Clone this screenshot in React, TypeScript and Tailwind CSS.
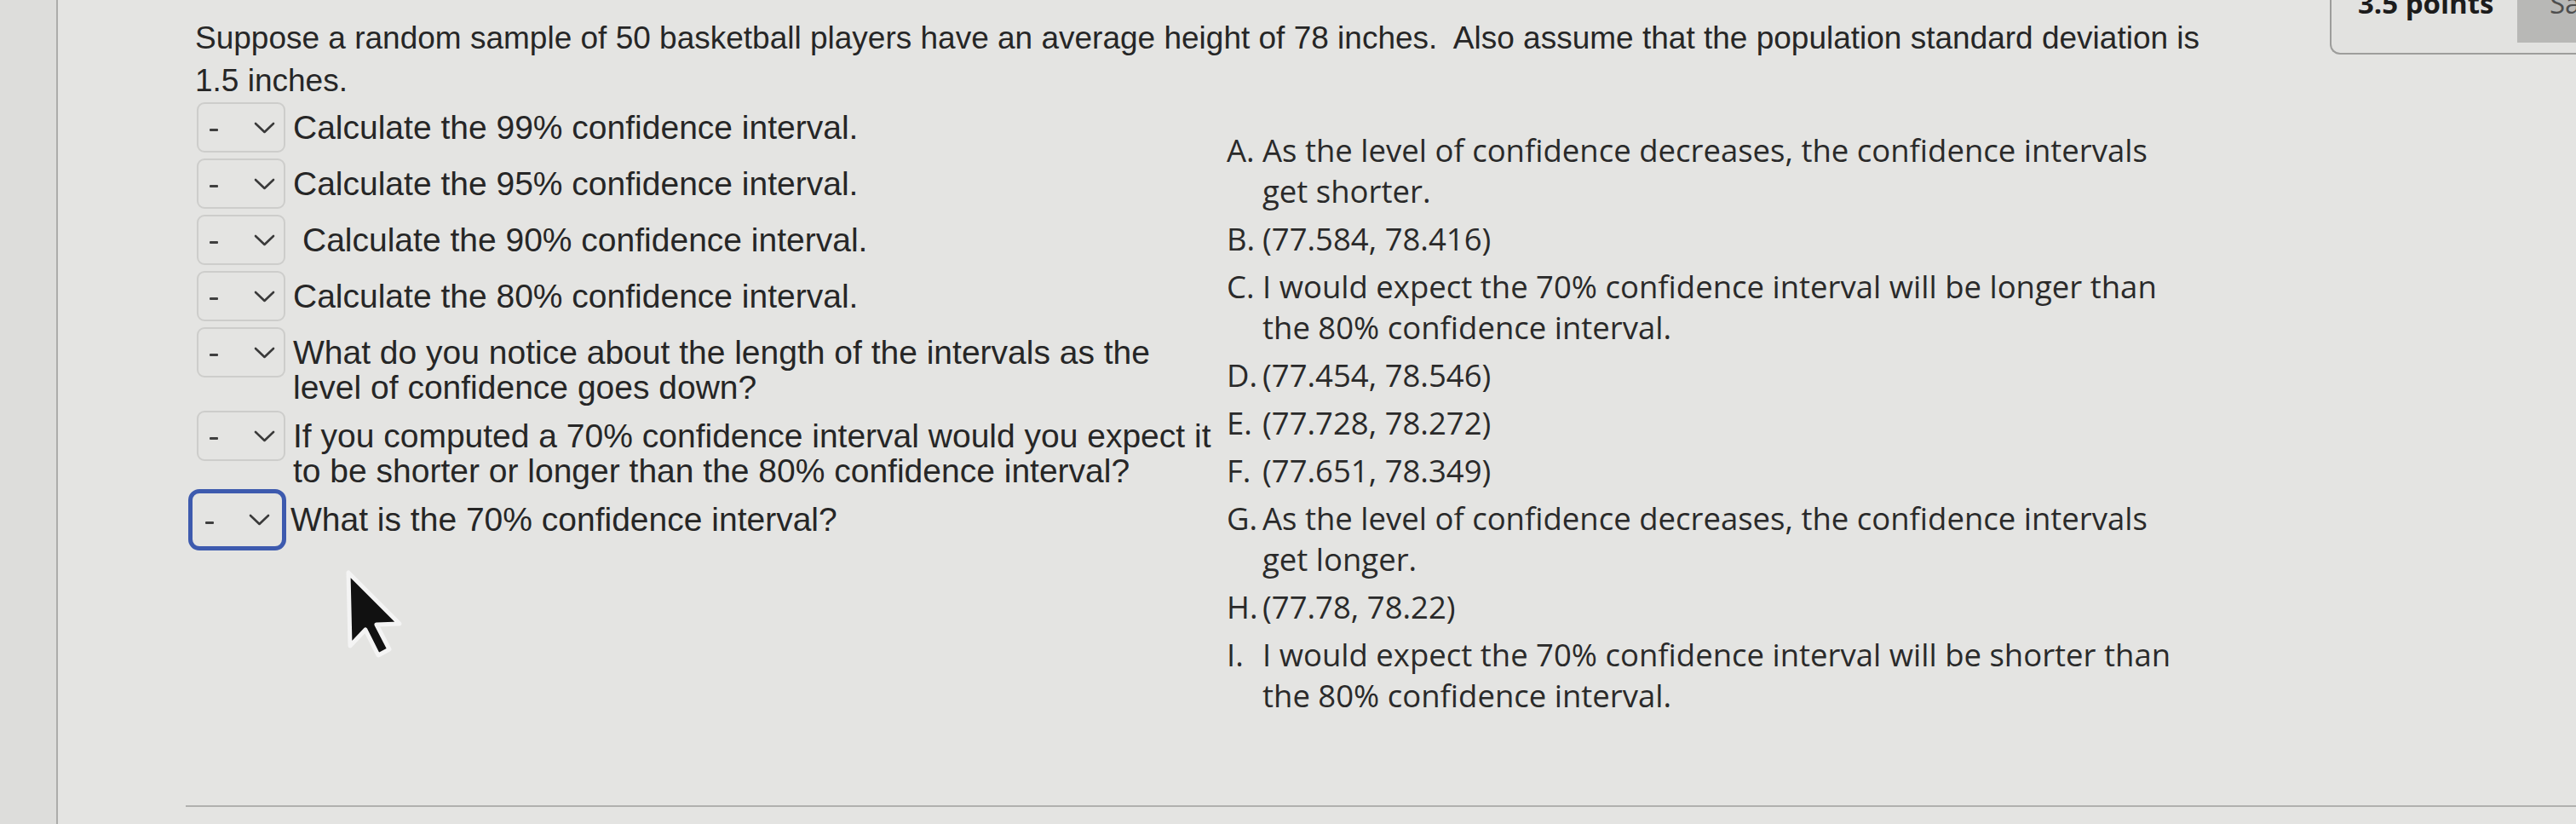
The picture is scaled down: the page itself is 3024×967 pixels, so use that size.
import clsx from 'clsx';

const questions = [
  { lines: ['Calculate the 99% confidence interval.'] },
  { lines: ['Calculate the 95% confidence interval.'] },
  { lines: ['Calculate the 90% confidence interval.'], indent: true },
  { lines: ['Calculate the 80% confidence interval.'] },
  { lines: ['What do you notice about the length of the intervals as the', 'level of confidence goes down?'] },
  { lines: ['If you computed a 70% confidence interval would you expect it', 'to be shorter or longer than the 80% confidence interval?'] },
  { lines: ['What is the 70% confidence interval?'], focused: true },
];

const answers = [
  { label: 'A.', lines: ['As the level of confidence decreases, the confidence intervals', 'get shorter.'] },
  { label: 'B.', lines: ['(77.584, 78.416)'] },
  { label: 'C.', lines: ['I would expect the 70% confidence interval will be longer than', 'the 80% confidence interval.'] },
  { label: 'D.', lines: ['(77.454, 78.546)'] },
  { label: 'E.', lines: ['(77.728, 78.272)'] },
  { label: 'F.', lines: ['(77.651, 78.349)'] },
  { label: 'G.', lines: ['As the level of confidence decreases, the confidence intervals', 'get longer.'] },
  { label: 'H.', lines: ['(77.78, 78.22)'] },
  { label: 'I.', lines: ['I would expect the 70% confidence interval will be shorter than', 'the 80% confidence interval.'] },
];

const Chevron = () => (
  <svg width="25" height="14" viewBox="0 0 25 14" fill="none">
    <path d="M2 2 L12.5 12 L23 2" stroke="#3a3a3a" strokeWidth="2.6" strokeLinecap="round" strokeLinejoin="round" />
  </svg>
);

const SelectBox = ({ focused }: { focused?: boolean }) => (
  <div
    className={clsx(
      'shrink-0 flex items-center',
      focused
        ? '-ml-[10px] -mt-[6px] w-[115px] h-[72px] rounded-[13px] border-[5px] border-[#3d5aae]'
        : 'w-[104px] h-[59px] rounded-[9px] border-2 border-[#cdcdcb]'
    )}
  >
    <span
      className={clsx(
        'w-[10px] h-[3px] mt-[6px] bg-[#3f3f3f] rounded-[1px]',
        focused ? 'ml-[15px]' : 'ml-[13px]'
      )}
    />
    <span className={clsx(focused ? 'ml-[41px]' : 'ml-[42px]')}>
      <Chevron />
    </span>
  </div>
);

const Cursor = () => (
  <svg className="absolute left-[405px] top-[668px]" width="68" height="104" viewBox="-4 -4 68 104">
    <path
      d="M0 0 L2 86 L20 67 L35 97 L48 90 L33 61 L60 60 Z"
      fill="#111"
      stroke="#f4f4f4"
      strokeWidth="5"
      strokeLinejoin="round"
    />
  </svg>
);

export default function App() {
  return (
    <div
      className="relative w-[3024px] h-[967px] overflow-hidden flex bg-[#e4e4e2] text-[#262626]"
      style={{ fontFamily: '"Liberation Sans", Arial, sans-serif' }}
    >
      <div className="w-[68px] h-full shrink-0 border-r-2 border-[#acacaa] bg-[#dddddb]" />

      <div className="flex-1 flex flex-col">
        <div className="flex">
          <main className="flex-1 pl-[161px] pt-[20px]">
            <p className="text-[37px] leading-[50px] whitespace-nowrap">
              Suppose a random sample of 50 basketball players have an average height of 78 inches.&nbsp; Also assume that the population standard deviation is
              <br />
              1.5 inches.
            </p>

            <div className="flex">
              <div className="w-[1211px] shrink-0 flex flex-col gap-[7px] pl-[2px]">
                {questions.map((q, i) => (
                  <div key={i} className="flex items-start gap-[9px]">
                    <SelectBox focused={q.focused} />
                    <p
                      className={clsx(
                        'text-[39px] leading-[41px] pt-[9px] whitespace-nowrap',
                        q.focused && '-ml-[4px]',
                        q.indent && 'pl-[11px]'
                      )}
                    >
                      {q.lines.map((l, j) => (
                        <span key={j} className="block">
                          {l}
                        </span>
                      ))}
                    </p>
                  </div>
                ))}
              </div>

              <div
                className="mt-[32px] flex flex-col gap-[8px] text-[36.5px] leading-[48px] text-[#2a2a2a]"
                style={{ fontFamily: '"Open Sans", "Liberation Sans", sans-serif' }}
              >
                {answers.map((a) => (
                  <div key={a.label} className="flex">
                    <span className="w-[42px] shrink-0">{a.label}</span>
                    <div className="whitespace-nowrap">
                      {a.lines.map((l, j) => (
                        <span key={j} className="block">
                          {l}
                        </span>
                      ))}
                    </div>
                  </div>
                ))}
              </div>
            </div>
          </main>

          <aside
            className="w-[289px] shrink-0"
            style={{ fontFamily: '"Open Sans", "Liberation Sans", sans-serif' }}
          >
            <div className="h-[64px] flex items-start rounded-bl-[12px] border-l-2 border-b-2 border-[#9d9d9b] bg-[#e2e2e0]">
              <span className="ml-[31px] -mt-[13px] text-[33px] leading-[33px] font-bold text-[#1c1c1c] whitespace-nowrap">
                3.5 points
              </span>
              <div className="ml-auto w-[69px] h-[50px] bg-[#b8b8b6] flex items-start">
                <span className="ml-[38px] -mt-[13px] text-[33px] leading-[33px] text-[#4e4e4e]">Sa</span>
              </div>
            </div>
          </aside>
        </div>

        <div className="mt-auto ml-[150px] h-[22px] border-t-2 border-[#b0b0ae]" />
      </div>

      <Cursor />
    </div>
  );
}
